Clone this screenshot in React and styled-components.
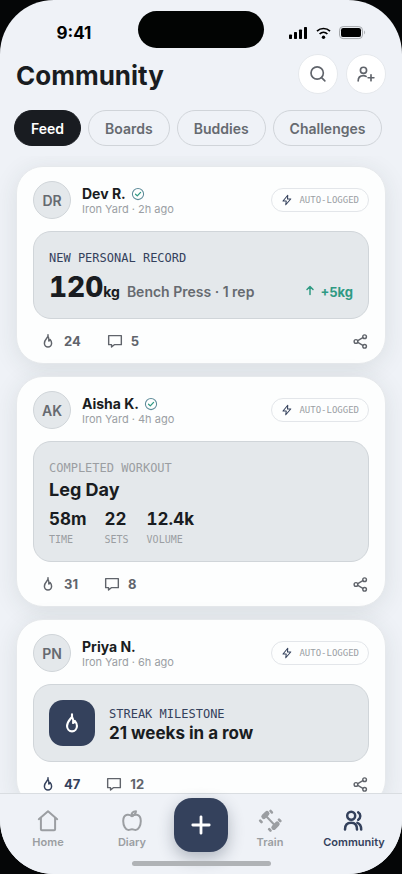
import React from 'react'
import styled, { createGlobalStyle } from 'styled-components'

const GlobalStyle = createGlobalStyle`
  * {
    box-sizing: border-box;
  }
  body {
    margin: 0;
    background: #050607;
    color: #191c21;
    font-family: Inter, 'Liberation Sans', sans-serif;
    -webkit-font-smoothing: antialiased;
  }
  button {
    font: inherit;
    color: inherit;
    cursor: pointer;
  }
  h1, h2, h3, p, dl, dd {
    margin: 0;
  }
`

const stroke = {
  fill: 'none',
  stroke: 'currentColor',
  strokeLinecap: 'round',
  strokeLinejoin: 'round',
}

const Icon = ({ size = 24, weight = 2, children }) => (
  <svg width={size} height={size} viewBox="0 0 24 24" strokeWidth={weight} aria-hidden="true" {...stroke}>
    {children}
  </svg>
)

const SearchIcon = () => (
  <Icon size={20} weight={2}>
    <circle cx="11" cy="10.8" r="7.4" />
    <path d="m16.600 16.600 3.600 3.600" />
  </Icon>
)

const AddUserIcon = () => (
  <Icon size={20} weight={2}>
    <circle cx="9" cy="7.6" r="3.7" />
    <path d="M2.600 20.400c0-4.200 2.600-6.400 6.200-6.400 1.300 0 2.400.3 3.300.9" />
    <path d="M18 13v7M14.500 16.500h7" />
  </Icon>
)

const FlameIcon = ({ size = 16, weight = 2.2 }) => (
  <Icon size={size} weight={weight}>
    <path d="M12 2.500v2.700C10.400 7.800 6.600 10.400 6.600 15.400a5.400 5.700 0 0 0 10.800 0c0-2.400-1-4.200-2.300-5.700-.3 1.200-.9 1.900-1.900 2.300.4-2.500.2-4.700-1.200-6.800" />
  </Icon>
)

const CommentIcon = () => (
  <Icon size={16} weight={2.1}>
    <path d="M2.500 4h19v13.500H11L6.800 21v-3.500H2.500z" />
  </Icon>
)

const ShareIcon = () => (
  <Icon size={17} weight={2}>
    <circle cx="5.600" cy="12" r="2.600" />
    <circle cx="17.800" cy="5.200" r="2.600" />
    <circle cx="17.800" cy="18.800" r="2.600" />
    <path d="m8.200 10.600 7.100-4M8.200 13.400l7.100 4" />
  </Icon>
)

const BoltIcon = () => (
  <Icon size={12} weight={2.1}>
    <path d="M13.500 2.500 4 14h6.500L9.500 21.500 19.500 10H13z" />
  </Icon>
)

const VerifiedIcon = () => (
  <Icon size={14} weight={1.8}>
    <circle cx="12" cy="12" r="9.6" stroke="#5d8b99" />
    <path d="m7.800 12.400 3 2.800 5.600-6" stroke="#2f9a83" strokeWidth="2.2" />
  </Icon>
)

const ArrowUpIcon = () => (
  <Icon size={12} weight={3}>
    <path d="M12 19V3M6 9l6-6 6 6" />
  </Icon>
)

const HomeIcon = () => (
  <Icon>
    <path d="M2.800 10.200 12 2.200l9.200 8" />
    <path d="M4.900 9v11.200c0 .6.4 1 1 1h12.200c.6 0 1-.4 1-1V9" />
  </Icon>
)

const AppleIcon = () => (
  <Icon>
    <path d="M12 7.200C10.300 6 8.800 5.500 7.300 5.800 4.600 6.300 3.200 8.800 3.200 12c0 4.600 2.400 9 5.300 9 1.300 0 2-.7 3.500-.7s2.200.7 3.500.7c2.900 0 5.300-4.400 5.300-9 0-3.200-1.400-5.700-4.100-6.200-1.500-.3-3 .2-4.700 1.400z" />
    <path d="M11.600 7c-.4-2.800 1-4.800 4.400-4.800-.2 2.400-1.600 4.200-4.400 4.800z" />
  </Icon>
)

const DumbbellIcon = () => (
  <Icon>
    <path d="m7 6 10.500 11" />
    <path d="m5.800 7.600 3.200-3.200M15.800 18.400l3.400-3.400" strokeWidth="5" />
    <path d="m12.600 2 1.200 1.400M2.200 11.600l1.300 1.400M21 10.600l1.300 1.400M11.200 20.200l1.300 1.400" strokeWidth="2.6" />
  </Icon>
)

const PeopleIcon = () => (
  <Icon weight={2.5}>
    <circle cx="9.200" cy="6.800" r="4" />
    <path d="M3 20.400c0-4.200 2.500-6.600 6.200-6.600 3.600 0 5.800 2.400 5.800 6.600" />
    <path d="M16.200 3.400c2.800 1.600 2.800 5.800 0 7.400M15.400 13.800c2.400.9 3.800 3.200 3.800 6.600" />
  </Icon>
)

const PlusIcon = () => (
  <Icon size={24} weight={2.8}>
    <path d="M12 3.800v16.400M3.800 12h16.400" />
  </Icon>
)

const Phone = styled.div`
  display: flex;
  flex-direction: column;
  height: 100vh;
  overflow: hidden;
  border-radius: 54px;
  background: #eff2f7;
`

const StatusBar = styled.div`
  display: grid;
  grid-template-columns: 1fr 126px 1fr;
  align-items: center;
  padding: 11px 0 6px;
  color: #000;
`

const Clock = styled.time`
  padding: 6px 0 0 10px;
  text-align: center;
  font-size: 17px;
  line-height: 20px;
  font-weight: 700;
`

const Island = styled.div`
  height: 37px;
  border-radius: 20px;
  background: #020403;
`

const StatusIcons = styled.div`
  display: flex;
  justify-content: center;
  padding: 6px 10px 0 0;

  svg {
    display: block;
  }
`

const Header = styled.header`
  display: flex;
  align-items: center;
  justify-content: space-between;
  padding: 0 16px;
`

const Title = styled.h1`
  padding-top: 4px;
  font-size: 26px;
  line-height: 36px;
  font-weight: 700;
`

const HeaderActions = styled.div`
  display: flex;
  gap: 8px;
`

const RoundButton = styled.button`
  display: grid;
  place-items: center;
  width: 40px;
  height: 40px;
  padding: 0;
  border: 1px solid #e5e8ec;
  border-radius: 50%;
  background: #fff;
  color: #60646b;
`

const Tabs = styled.nav`
  display: flex;
  gap: 7px;
  padding: 16px 14px 10px;
`

const Tab = styled.button`
  height: 36px;
  padding: 0 16px;
  border: 1px solid ${({ $active }) => ($active ? '#191c21' : '#d0d4d9')};
  border-radius: 18px;
  background: ${({ $active }) => ($active ? '#191c21' : 'transparent')};
  color: ${({ $active }) => ($active ? '#fff' : '#666a70')};
  font-size: 14px;
  font-weight: 600;
`

const Feed = styled.main`
  display: flex;
  flex: 1;
  flex-direction: column;
  gap: 12px;
  min-height: 0;
  padding: 10px 16px;
  overflow-y: auto;
  scrollbar-width: none;
`

const Card = styled.article`
  flex: none;
  padding: 14px 16px 0;
  border: 1px solid #e6e9ec;
  border-radius: 27px;
  background: #fdfefe;
  box-shadow: 0 4px 24px rgba(40, 55, 45, 0.1);
`

const CardHeader = styled.header`
  display: flex;
  align-items: center;
  margin-bottom: 12px;
`

const Avatar = styled.div`
  display: grid;
  place-items: center;
  width: 38px;
  height: 38px;
  margin-right: 11px;
  border: 1px solid #d0d5d9;
  border-radius: 50%;
  background: #e4e8eb;
  color: #666a70;
  font-size: 14px;
  font-weight: 600;
`

const Author = styled.div`
  flex: 1;
  padding-top: 2px;
`

const Name = styled.h2`
  display: flex;
  align-items: center;
  gap: 5px;
  font-size: 14px;
  line-height: 16px;
  font-weight: 700;
`

const Meta = styled.p`
  color: #9b9ea4;
  font-size: 11px;
  line-height: 14px;
`

const Mono = styled.p`
  color: ${({ $muted }) => ($muted ? '#9b9ea2' : '#34415c')};
  font-family: 'DejaVu Sans Mono', monospace;
  font-size: 12px;
  line-height: 16px;
  text-transform: uppercase;
`

const LoggedBadge = styled.span`
  display: flex;
  align-items: center;
  gap: 6px;
  height: 24px;
  padding: 0 9px;
  border: 1px solid #e3e6ea;
  border-radius: 12px;
  color: #9b9ea4;
  font-family: 'DejaVu Sans Mono', monospace;
  font-size: 9px;

  svg {
    color: #34415c;
  }
`

const Panel = styled.section`
  padding: 18px 15px 14px;
  border: 1px solid #d0d5d9;
  border-radius: 18px;
  background: #e4e8eb;
`

const StreakPanel = styled(Panel)`
  display: flex;
  align-items: center;
  gap: 14px;
  padding: 15px;
`

const StreakText = styled.div`
  padding-top: 4px;
`

const StreakBadge = styled.div`
  display: grid;
  place-items: center;
  width: 46px;
  height: 46px;
  border-radius: 14px;
  background: #34415c;
  color: #fff;
`

const PanelTitle = styled.h3`
  font-size: 17px;
  line-height: 22px;
  font-weight: 700;
`

const WorkoutTitle = styled(PanelTitle)`
  padding-top: 3px;
  font-size: 18px;
`

const RecordRow = styled.div`
  display: flex;
  align-items: baseline;
  padding-top: 4px;
  line-height: 16px;
`

const RecordValue = styled.strong`
  font-size: 28px;
  line-height: 34px;
  font-weight: 800;
  font-variant-numeric: tabular-nums;
`

const RecordUnit = styled.span`
  font-size: 14px;
  font-weight: 700;
`

const RecordLift = styled.span`
  flex: 1;
  padding-left: 7px;
  color: #666a70;
  font-size: 14px;
  font-weight: 600;
`

const Gain = styled.span`
  color: #2f9a83;
  font-size: 13px;
  font-weight: 700;

  svg {
    margin-right: 1px;
  }
`

const Stats = styled.dl`
  display: flex;
  gap: 18px;
  padding-top: 8px;
`

const Stat = styled.div`
  display: flex;
  flex-direction: column-reverse;
  gap: 4px;

  dt {
    color: #9b9ea2;
    font-family: 'DejaVu Sans Mono', monospace;
    font-size: 10px;
    line-height: 14px;
  }
  dd {
    font-size: 17px;
    line-height: 20px;
    font-weight: 700;
    font-variant-numeric: tabular-nums;
  }
`

const Actions = styled.footer`
  display: flex;
  align-items: center;
  gap: 12px;
  height: 44px;
`

const ActionButton = styled.button`
  display: flex;
  align-items: center;
  gap: 8px;
  padding: 0 7px;
  border: 0;
  background: none;
  color: ${({ $active }) => ($active ? '#34415c' : '#60646b')};
  font-size: 13px;
  font-weight: 700;
`

const ShareButton = styled(ActionButton)`
  margin-left: auto;
  padding: 0;
`

const BottomBar = styled.footer`
  position: relative;
  padding: 4px 6px 8px;
  border-top: 1px solid #d9dde1;
  background: #eff2f7;
`

const NavRow = styled.nav`
  display: flex;
  align-items: center;
`

const NavLink = styled.a`
  display: flex;
  flex: 1;
  flex-direction: column;
  align-items: center;
  gap: 2px;
  padding-top: 8px;
  color: ${({ $active }) => ($active ? '#34415c' : '#9b9ea2')};
  font-size: 11px;
  line-height: 14px;
  font-weight: 600;
  text-decoration: none;
`

const AddButton = styled.button`
  display: grid;
  place-items: center;
  width: 54px;
  height: 54px;
  padding: 0;
  border: 0;
  border-radius: 18px;
  background: #34415c;
  color: #fff;
  box-shadow: 0 6px 16px rgba(30, 42, 64, 0.3);
`

const HomeIndicator = styled.div`
  position: relative;
  width: 139px;
  height: 5px;
  margin: 9px auto 0;
  border-radius: 3px;
  background: #b0b3b6;
`

const StatusGlyphs = () => (
  <svg width="78" height="14" viewBox="0 0 78 14" aria-hidden="true">
    <rect x="0" y="8.5" width="3" height="4.5" rx="0.7" />
    <rect x="5" y="6" width="3" height="7" rx="0.7" />
    <rect x="10" y="3.5" width="3" height="9.5" rx="0.7" />
    <rect x="15" y="1" width="3" height="12" rx="0.7" />
    <path d="M28 5.200c3.600-3.600 9.400-3.600 13 0M30.600 8c2.200-2.200 5.600-2.200 7.800 0" fill="none" stroke="#000" strokeWidth="1.7" />
    <circle cx="34.5" cy="11.2" r="1.7" />
    <rect x="50.5" y="0.6" width="23" height="12" rx="3.6" fill="none" stroke="#a5a8ac" />
    <rect x="52" y="2.1" width="20" height="9" rx="2.2" />
    <path d="M75.200 4.600c1.200.7 1.200 3.200 0 3.900z" fill="#a5a8ac" />
  </svg>
)

const Post = ({ initials, name, verified, time, likes, comments, liked, children }) => (
  <Card>
    <CardHeader>
      <Avatar>{initials}</Avatar>
      <Author>
        <Name>
          {name} {verified && <VerifiedIcon />}
        </Name>
        <Meta>Iron Yard · {time} ago</Meta>
      </Author>
      <LoggedBadge>
        <BoltIcon /> AUTO-LOGGED
      </LoggedBadge>
    </CardHeader>
    {children}
    <Actions>
      <ActionButton $active={liked} aria-pressed={!!liked}>
        <FlameIcon /> {likes}
      </ActionButton>
      <ActionButton>
        <CommentIcon /> {comments}
      </ActionButton>
      <ShareButton aria-label="Share">
        <ShareIcon />
      </ShareButton>
    </Actions>
  </Card>
)

const tabs = ['Feed', 'Boards', 'Buddies', 'Challenges']

const stats = [
  { label: 'TIME', value: '58m' },
  { label: 'SETS', value: '22' },
  { label: 'VOLUME', value: '12.4k' },
]

function App() {
  return (
    <>
      <GlobalStyle />
      <Phone>
        <StatusBar>
          <Clock>9:41</Clock>
          <Island />
          <StatusIcons>
            <StatusGlyphs />
          </StatusIcons>
        </StatusBar>
        <Header>
          <Title>Community</Title>
          <HeaderActions>
            <RoundButton aria-label="Search">
              <SearchIcon />
            </RoundButton>
            <RoundButton aria-label="Add friend">
              <AddUserIcon />
            </RoundButton>
          </HeaderActions>
        </Header>
        <Tabs>
          {tabs.map((tab, i) => (
            <Tab key={tab} $active={i === 0}>{tab}</Tab>
          ))}
        </Tabs>
        <Feed>
          <Post initials="DR" name="Dev R." verified time="2h" likes={24} comments={5}>
            <Panel>
              <Mono>New personal record</Mono>
              <RecordRow>
                <RecordValue>120</RecordValue>
                <RecordUnit>kg</RecordUnit>
                <RecordLift>Bench Press · 1 rep</RecordLift>
                <Gain>
                  <ArrowUpIcon /> +5kg
                </Gain>
              </RecordRow>
            </Panel>
          </Post>
          <Post initials="AK" name="Aisha K." verified time="4h" likes={31} comments={8}>
            <Panel>
              <Mono $muted>Completed workout</Mono>
              <WorkoutTitle>Leg Day</WorkoutTitle>
              <Stats>
                {stats.map((stat) => (
                  <Stat key={stat.label}>
                    <dt>{stat.label}</dt>
                    <dd>{stat.value}</dd>
                  </Stat>
                ))}
              </Stats>
            </Panel>
          </Post>
          <Post initials="PN" name="Priya N." time="6h" likes={47} comments={12} liked>
            <StreakPanel>
              <StreakBadge>
                <FlameIcon size={22} weight={2.3} />
              </StreakBadge>
              <StreakText>
                <Mono>Streak milestone</Mono>
                <PanelTitle>21 weeks in a row</PanelTitle>
              </StreakText>
            </StreakPanel>
          </Post>
        </Feed>
        <BottomBar>
          <NavRow>
            <NavLink href="#home"><HomeIcon />Home</NavLink>
            <NavLink href="#diary"><AppleIcon />Diary</NavLink>
            <AddButton aria-label="Add">
              <PlusIcon />
            </AddButton>
            <NavLink href="#train"><DumbbellIcon />Train</NavLink>
            <NavLink href="#community" $active><PeopleIcon />Community</NavLink>
          </NavRow>
          <HomeIndicator />
        </BottomBar>
      </Phone>
    </>
  )
}

export default App
